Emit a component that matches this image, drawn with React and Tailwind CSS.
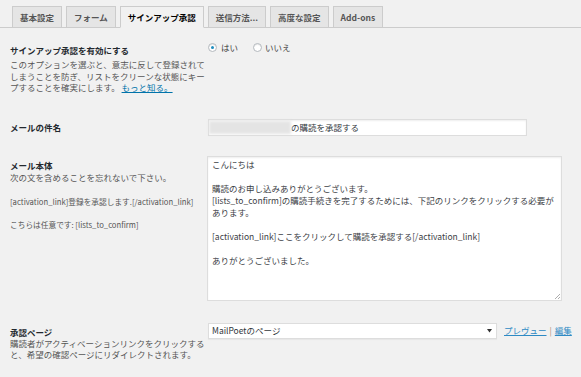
import React from "react";

const tabs = [
  { label: "基本設定" },
  { label: "フォーム" },
  { label: "サインアップ承認", active: true },
  { label: "送信方法..." },
  { label: "高度な設定" },
  { label: "Add-ons" },
];

function Radio({ checked }) {
  return (
    <span className="relative inline-block w-[9px] h-[9px] rounded-full border border-[#b4b9be] bg-white shadow-[inset_0_1px_1px_rgba(0,0,0,0.1)]">
      {checked && (
        <span className="absolute left-[2px] top-[2px] w-[3px] h-[3px] rounded-full bg-[#1e8cbe]" />
      )}
    </span>
  );
}

export default function App() {
  return (
    <div
      className="w-[581px] h-[377px] overflow-hidden bg-[#f1f1f1] text-[#23282d]"
      style={{ fontFamily: '"Noto Sans CJK JP", "Noto Sans", sans-serif' }}
    >
      {/* Tabs */}
      <div className="flex gap-[4px] pt-[6px] pl-[12px] border-b border-[#ccc]">
        {tabs.map((t) => (
          <div
            key={t.label}
            className={
              "h-[22px] -mb-px px-[7px] border text-[8.5px] font-bold leading-[20px] whitespace-nowrap " +
              (t.active
                ? "bg-[#f1f1f1] border-[#ccc] border-b-[#f1f1f1] text-[#000]"
                : "bg-[#e5e5e5] border-[#ccc] text-[#555]")
            }
          >
            {t.label}
          </div>
        ))}
      </div>

      {/* Row 1 */}
      <div className="flex pt-[13px]">
        <div className="w-[208px] pl-[10px] pt-[3px] shrink-0">
          <div className="text-[8.5px] font-bold leading-[12px]">サインアップ承認を有効にする</div>
          <div className="mt-[3px] text-[8.5px] leading-[11.5px] text-[#555] whitespace-nowrap">
            このオプションを選ぶと、意志に反して登録されて
            <br />
            しまうことを防ぎ、リストをクリーンな状態にキー
            <br />
            プすることを確実にします。{" "}
            <span className="text-[#0073aa] underline">もっと知る。</span>
          </div>
        </div>
        <div className="flex items-center h-[12px] text-[8.5px] text-[#444]">
          <Radio checked />
          <span className="ml-[4px]">はい</span>
          <span className="ml-[15px] flex items-center">
            <Radio />
          </span>
          <span className="ml-[3px]">いいえ</span>
        </div>
      </div>

      {/* Row 2 */}
      <div className="flex items-center mt-[25px] h-[17px]">
        <div className="w-[208px] pl-[10px] shrink-0 text-[8.5px] font-bold leading-[12px]">メールの件名</div>
        <div className="w-[319px] h-[17px] bg-white border border-[#ddd] shadow-[inset_0_1px_2px_rgba(0,0,0,0.07)] flex items-center text-[8.5px] text-[#32373c]">
          <span className="inline-block w-[82px] h-[13px] bg-[#e4e4e4] blur-[1.5px]" />
          <span>の購読を承認する</span>
        </div>
      </div>

      {/* Row 3 */}
      <div className="flex mt-[20px]">
        <div className="w-[207px] pl-[10px] pt-[3px] shrink-0">
          <div className="text-[8.5px] font-bold leading-[12px]">メール本体</div>
          <div className="text-[8.5px] leading-[12px] text-[#555]">次の文を含めることを忘れないで下さい。</div>
          <div className="mt-[13px] text-[7.7px] leading-[12px] text-[#555] whitespace-nowrap">
            [activation_link]登録を承認します.[/activation_link]
          </div>
          <div className="mt-[11px] text-[7.7px] leading-[12px] text-[#555] whitespace-nowrap">
            こちらは任意です: [lists_to_confirm]
          </div>
        </div>
        <div className="relative w-[355px] h-[145px] bg-white border border-[#ddd] shadow-[inset_0_1px_2px_rgba(0,0,0,0.07)] pl-[4px] pt-[1px] text-[8.5px] leading-[12px] text-[#3c4146] whitespace-nowrap">
          <div>こんにちは</div>
          <div>&nbsp;</div>
          <div>購読のお申し込みありがとうございます。</div>
          <div>[lists_to_confirm]の購読手続きを完了するためには、下記のリンクをクリックする必要が</div>
          <div>あります。</div>
          <div>&nbsp;</div>
          <div>[activation_link]ここをクリックして購読を承認する[/activation_link]</div>
          <div>&nbsp;</div>
          <div>ありがとうございました。</div>
          <svg className="absolute right-[1px] bottom-[1px]" width="6" height="6" viewBox="0 0 6 6">
            <path d="M6 1 L1 6 M6 4 L4 6" stroke="#999" strokeWidth="0.8" />
          </svg>
        </div>
      </div>

      {/* Row 4 */}
      <div className="flex mt-[22px]">
        <div className="w-[208px] pl-[10px] pt-[3px] shrink-0">
          <div className="text-[8.5px] font-bold leading-[12px]">承認ページ</div>
          <div className="text-[8.5px] leading-[11.5px] text-[#555] whitespace-nowrap">
            購読者がアクティベーションリンクをクリックする
            <br />
            と、希望の確認ページにリダイレクトされます。
          </div>
        </div>
        <div className="flex items-start">
          <div className="w-[289px] h-[16px] bg-white border border-[#ddd] shadow-[0_1px_1px_rgba(0,0,0,0.04)] flex items-center justify-between pl-[3px] pr-[4px] text-[8.5px] text-[#32373c]">
            <span>MailPoetのページ</span>
            <svg width="5" height="4" viewBox="0 0 5 4">
              <path d="M0 0 L5 0 L2.5 3.5 Z" fill="#333" />
            </svg>
          </div>
          <div className="ml-[7px] h-[16px] flex items-center text-[8.5px]">
            <span className="text-[#2e8ac4] underline">プレヴュー</span>
            <span className="mx-[3px] text-[#b08a6a]">|</span>
            <span className="text-[#2e8ac4] underline">編集</span>
          </div>
        </div>
      </div>
    </div>
  );
}
